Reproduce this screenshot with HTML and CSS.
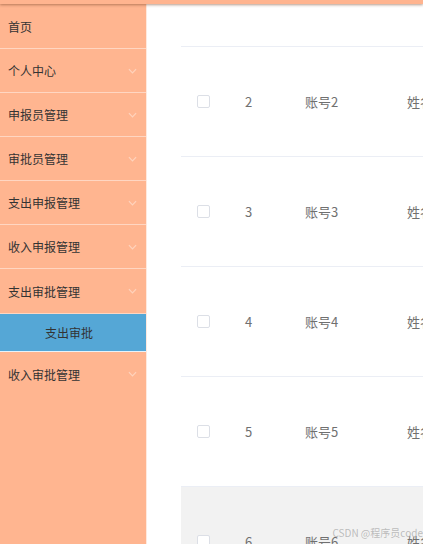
FILE: index.html
```html
<!DOCTYPE html>
<html lang="zh">
<head>
<meta charset="utf-8">
<link rel="stylesheet" href="styles.css">
</head>
<body>
<div class="topbar"></div>
<div class="layout">
  <aside class="sidebar">
    <div class="item first"><span>首页</span></div>
    <div class="item"><span>个人中心</span><svg class="chev" viewBox="0 0 10 6"><path d="M1 1 L5 5 L9 1"/></svg></div>
    <div class="item"><span>申报员管理</span><svg class="chev" viewBox="0 0 10 6"><path d="M1 1 L5 5 L9 1"/></svg></div>
    <div class="item"><span>审批员管理</span><svg class="chev" viewBox="0 0 10 6"><path d="M1 1 L5 5 L9 1"/></svg></div>
    <div class="item"><span>支出申报管理</span><svg class="chev" viewBox="0 0 10 6"><path d="M1 1 L5 5 L9 1"/></svg></div>
    <div class="item"><span>收入申报管理</span><svg class="chev" viewBox="0 0 10 6"><path d="M1 1 L5 5 L9 1"/></svg></div>
    <div class="item open"><span>支出审批管理</span><svg class="chev" viewBox="0 0 10 6"><path d="M1 1 L5 5 L9 1"/></svg></div>
    <div class="sub"><span>支出审批</span></div>
    <div class="item last"><span>收入审批管理</span><svg class="chev" viewBox="0 0 10 6"><path d="M1 1 L5 5 L9 1"/></svg></div>
  </aside>
  <main class="main">
    <div class="table">
      <div class="row"><div class="cell"><span class="cb"></span></div><div class="cell">2</div><div class="cell">账号2</div><div class="cell">姓名2</div></div>
      <div class="row"><div class="cell"><span class="cb"></span></div><div class="cell">3</div><div class="cell">账号3</div><div class="cell">姓名3</div></div>
      <div class="row"><div class="cell"><span class="cb"></span></div><div class="cell">4</div><div class="cell">账号4</div><div class="cell">姓名4</div></div>
      <div class="row"><div class="cell"><span class="cb"></span></div><div class="cell">5</div><div class="cell">账号5</div><div class="cell">姓名5</div></div>
      <div class="row hover"><div class="cell"><span class="cb"></span></div><div class="cell">6</div><div class="cell">账号6</div><div class="cell">姓名6</div></div>
    </div>
  </main>
</div>
<div class="watermark">CSDN @程序员code</div>
</body>
</html>
```
FILE: styles.css
```css
html, body {
  margin: 0;
  padding: 0;
  height: 544px;
  overflow: hidden;
  background: #fff;
  font-family: "Noto Sans CJK SC", "Noto Sans", sans-serif;
}
.topbar {
  position: relative;
  z-index: 2;
  height: 4px;
  background: #ffb48f;
  box-shadow: 0 1px 3px rgba(120, 70, 40, 0.55);
}
.layout {
  display: flex;
  height: 540px;
}
.sidebar {
  width: 146px;
  flex: none;
  background: #ffb590;
  border-right: 1px solid #ffe9de;
  display: flex;
  flex-direction: column;
}
.item {
  height: 43px;
  border-bottom: 1px solid #ffd6c2;
  display: flex;
  align-items: center;
  justify-content: space-between;
  padding: 0 8px 0 8px;
  font-size: 12px;
  color: #333;
}
.item.first { height: 44px; }
.item.open { height: 44px; }
.item.last { border-bottom: none; height: 44px; }
.chev {
  width: 9px;
  height: 6px;
  margin-right: 1px;
  fill: none;
  stroke: #ffd3bd;
  stroke-width: 1.3;
}
.sub {
  height: 37px;
  background: #55a7d6;
  border-bottom: 1px solid #e9f2f8;
  display: flex;
  align-items: center;
  padding-left: 45px;
  font-size: 12px;
  color: #333;
}
.main {
  flex: 1;
  padding: 42px 0 0 34px;
  overflow: hidden;
}
.table {
  display: flex;
  flex-direction: column;
}
.row {
  display: grid;
  grid-template-columns: 50px 60px 102px 1fr;
  height: 109px;
  border-top: 1px solid #ebeef5;
  align-items: center;
  font-size: 13px;
  color: #707070;
  white-space: nowrap;
}
.row.hover { background: #f2f2f2; }
.cell {
  padding-left: 14px;
  overflow: hidden;
}
.cell:first-child { padding-left: 16px; }
.cb {
  display: block;
  width: 11px;
  height: 11px;
  border: 1px solid #dcdfe6;
  border-radius: 2px;
  background: #fff;
}
.watermark {
  position: absolute;
  right: 0;
  bottom: 4px;
  font-size: 10px;
  color: rgba(150, 150, 150, 0.6);
  font-family: "Noto Sans CJK SC", "Noto Sans", sans-serif;
}
```
